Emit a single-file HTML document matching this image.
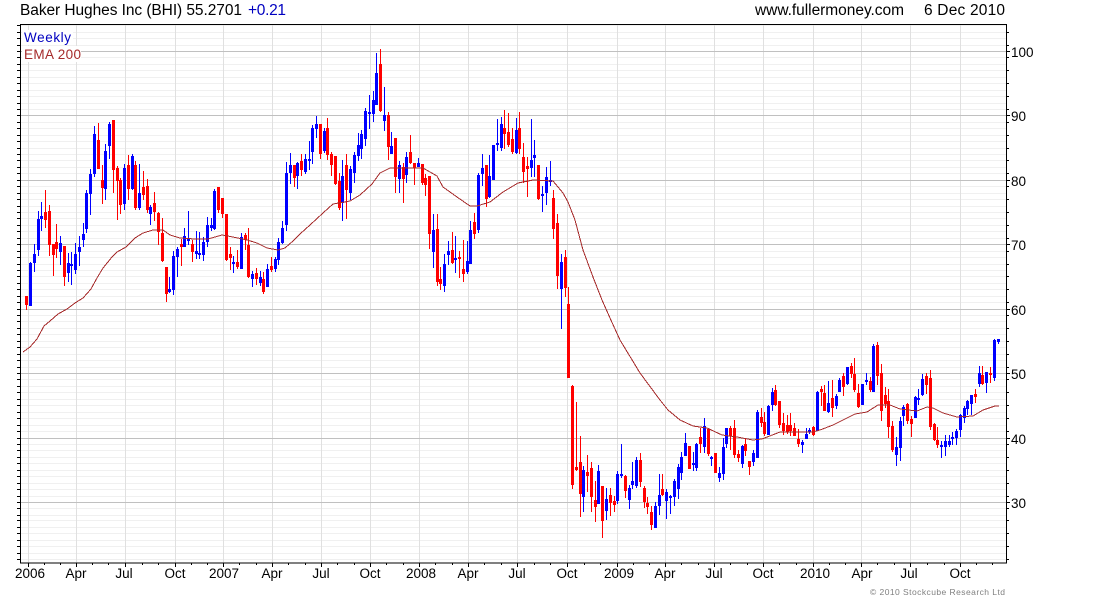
<!DOCTYPE html>
<html><head><meta charset="utf-8"><style>
html,body{margin:0;padding:0;background:#fff;width:1100px;height:600px;overflow:hidden}
svg{display:block}
text{font-family:"Liberation Sans",sans-serif}
</style></head><body>
<svg width="1100" height="600" viewBox="0 0 1100 600" xmlns="http://www.w3.org/2000/svg">
<rect width="1100" height="600" fill="#fff"/>
<g shape-rendering="crispEdges" fill="none">
<path stroke="#f0f0f0" d="M21 25.5H1006M21 32.5H1006M21 38.5H1006M21 45.5H1006M21 57.5H1006M21 64.5H1006M21 70.5H1006M21 77.5H1006M21 83.5H1006M21 90.5H1006M21 96.5H1006M21 103.5H1006M21 109.5H1006M21 122.5H1006M21 128.5H1006M21 135.5H1006M21 141.5H1006M21 148.5H1006M21 154.5H1006M21 160.5H1006M21 167.5H1006M21 173.5H1006M21 186.5H1006M21 193.5H1006M21 199.5H1006M21 206.5H1006M21 212.5H1006M21 218.5H1006M21 225.5H1006M21 231.5H1006M21 238.5H1006M21 251.5H1006M21 257.5H1006M21 264.5H1006M21 270.5H1006M21 276.5H1006M21 283.5H1006M21 289.5H1006M21 296.5H1006M21 302.5H1006M21 315.5H1006M21 321.5H1006M21 328.5H1006M21 334.5H1006M21 341.5H1006M21 347.5H1006M21 354.5H1006M21 360.5H1006M21 367.5H1006M21 379.5H1006M21 386.5H1006M21 392.5H1006M21 399.5H1006M21 405.5H1006M21 412.5H1006M21 418.5H1006M21 425.5H1006M21 431.5H1006M21 444.5H1006M21 450.5H1006M21 457.5H1006M21 463.5H1006M21 470.5H1006M21 476.5H1006M21 483.5H1006M21 489.5H1006M21 496.5H1006M21 508.5H1006M21 515.5H1006M21 520.5H1006M21 527.5H1006M21 533.5H1006M21 540.5H1006M21 546.5H1006M21 553.5H1006M21 559.5H1006"/>
<path stroke="#e0e0e0" d="M28.5 25V563M76.5 25V563M125.5 25V563M175.5 25V563M223.5 25V563M272.5 25V563M321.5 25V563M370.5 25V563M419.5 25V563M468.5 25V563M517.5 25V563M567.5 25V563M617.5 25V563M665.5 25V563M714.5 25V563M763.5 25V563M813.5 25V563M861.5 25V563M910.5 25V563M960.5 25V563"/>
<path stroke="#c0c0c0" d="M21 51.5H1006M21 115.5H1006M21 180.5H1006M21 244.5H1006M21 309.5H1006M21 373.5H1006M21 438.5H1006M21 502.5H1006"/>
<path stroke="#ff0000" d="M26.5 296V310M45.5 190V228M49.5 205V256M53.5 244V276M56.5 224V258M64.5 246V286M98.5 123V169M102.5 165V204M113.5 120V193M117.5 166V220M120.5 178V214M128.5 155V200M135.5 161V210M143.5 171V200M147.5 179V213M154.5 192V221M158.5 212V245M162.5 218V262M166.5 267V302M181.5 239V266M192.5 240V262M218.5 187V213M222.5 198V218M226.5 214V261M230.5 247V270M237.5 250V269M245.5 233V250M248.5 228V278M256.5 268V285M263.5 272V294M271.5 257V272M294.5 165V187M301.5 154V176M320.5 124V159M327.5 118V160M331.5 152V176M335.5 156V185M339.5 173V210M346.5 154V219M380.5 49V112M388.5 112V160M395.5 138V193M403.5 163V203M410.5 135V164M414.5 163V185M422.5 164V185M425.5 174V196M429.5 176V249M437.5 214V286M440.5 267V290M452.5 232V264M459.5 251V278M463.5 240V282M474.5 213V239M486.5 165V207M504.5 110V149M508.5 113V147M512.5 128V154M519.5 112V154M523.5 143V183M527.5 157V197M538.5 165V200M553.5 190V239M557.5 214V289M565.5 250V297M568.5 287V378M572.5 385V489M576.5 402V471M580.5 436V517M587.5 455V492M591.5 462V512M595.5 481V522M602.5 486V538M610.5 488V516M614.5 496V512M625.5 475V498M640.5 453V487M644.5 486V508M647.5 497V514M651.5 506V530M662.5 474V496M689.5 446V469M700.5 428V453M708.5 428V456M715.5 453V473M730.5 426V450M734.5 420V458M738.5 450V462M745.5 438V456M749.5 461V475M761.5 408V427M764.5 412V436M775.5 385V406M779.5 401V428M783.5 413V435M787.5 415V434M790.5 413V436M794.5 423V436M798.5 429V447M813.5 426V436M821.5 386V406M824.5 385V411M832.5 380V417M843.5 373V396M851.5 363V378M854.5 358V392M858.5 384V408M870.5 377V392M877.5 342V385M881.5 364V421M885.5 387V408M888.5 389V438M892.5 421V452M907.5 403V424M911.5 416V437M926.5 373V394M930.5 370V430M934.5 423V441M937.5 427V448M975.5 389V403M982.5 366V385M990.5 367V383"/>
<path stroke="#0000ff" d="M30.5 262V306M34.5 244V272M38.5 211V256M41.5 202V231M60.5 236V265M68.5 253V282M71.5 252V285M75.5 243V274M79.5 236V266M83.5 223V247M86.5 190V233M90.5 169V215M94.5 126V177M105.5 144V200M109.5 122V159M124.5 164V210M132.5 154V190M139.5 164V210M150.5 205V225M169.5 277V293M173.5 251V295M177.5 247V277M184.5 228V247M188.5 211V245M196.5 231V259M199.5 232V259M203.5 237V261M207.5 217V247M211.5 218V231M214.5 189V230M233.5 256V273M241.5 233V269M252.5 271V287M260.5 271V286M267.5 264V287M275.5 257V272M278.5 238V265M282.5 221V244M286.5 162V231M290.5 153V184M297.5 162V189M305.5 154V174M309.5 141V170M312.5 125V164M316.5 116V138M324.5 128V153M342.5 160V221M350.5 166V200M354.5 152V183M358.5 133V161M361.5 130V159M365.5 108V146M369.5 95V129M373.5 91V122M376.5 53V105M384.5 87V131M391.5 132V154M399.5 161V193M406.5 152V183M418.5 158V167M433.5 214V268M444.5 254V292M448.5 241V265M455.5 236V273M467.5 241V274M470.5 221V264M478.5 173V233M482.5 154V186M489.5 155V198M493.5 145V180M497.5 119V151M501.5 117V151M516.5 118V154M531.5 119V177M534.5 140V177M542.5 186V212M546.5 167V205M550.5 161V186M561.5 254V329M583.5 466V512M598.5 465V504M606.5 488V520M617.5 471V504M621.5 444V478M629.5 485V509M632.5 462V489M636.5 457V488M655.5 502V528M659.5 474V515M666.5 489V519M670.5 495V514M674.5 479V506M678.5 464V499M681.5 452V480M685.5 433V456M693.5 452V471M696.5 443V471M704.5 418V453M711.5 456V466M719.5 467V482M723.5 438V480M726.5 428V448M742.5 445V468M753.5 450V466M757.5 410V458M768.5 405V435M772.5 388V411M802.5 440V453M806.5 428V439M809.5 428V434M817.5 391V431M828.5 381V413M836.5 394V409M839.5 378V392M847.5 367V385M862.5 384V405M866.5 373V385M873.5 344V392M896.5 437V466M900.5 417V461M903.5 405V426M915.5 396V418M918.5 389V405M922.5 374V396M941.5 441V458M945.5 435V456M949.5 435V447M952.5 432V445M956.5 429V445M960.5 414V437M964.5 406V423M967.5 400V415M971.5 395V415M979.5 366V387M986.5 372V393M994.5 339V381M998.5 339V344"/>
<path stroke="#ff0000" stroke-width="3" d="M26.5 296V305M45.5 212V220M49.5 211V245M53.5 244V255M56.5 242V249M64.5 246V277M98.5 140V169M102.5 180V188M113.5 120V170M117.5 168V181M120.5 180V205M128.5 165V189M135.5 165V208M143.5 187V195M147.5 186V210M154.5 203V212M158.5 213V232M162.5 233V261M166.5 267V294M181.5 244V247M192.5 244V252M218.5 187V210M222.5 198V214M226.5 214V260M230.5 254V258M237.5 262V267M245.5 235V240M248.5 245V277M256.5 273V279M263.5 279V292M271.5 266V270M294.5 165V178M301.5 161V170M320.5 124V154M327.5 128V155M331.5 154V165M335.5 156V184M339.5 181V208M346.5 165V190M380.5 64V111M388.5 115V147M395.5 138V177M403.5 167V179M410.5 152V163M414.5 163V168M422.5 164V183M425.5 178V185M429.5 176V234M437.5 229V282M440.5 279V284M452.5 250V263M459.5 257V259M463.5 269V274M474.5 222V234M486.5 165V199M504.5 128V134M508.5 132V145M512.5 139V152M519.5 128V149M523.5 157V172M527.5 166V169M538.5 165V199M553.5 198V229M557.5 223V276M565.5 257V288M568.5 304V378M572.5 386V485M576.5 467V470M580.5 462V494M587.5 472V476M591.5 468V497M595.5 500V507M602.5 486V521M610.5 495V503M614.5 501V505M625.5 476V491M640.5 460V482M644.5 488V502M647.5 503V507M651.5 512V525M662.5 489V495M689.5 446V469M700.5 437V444M708.5 429V454M715.5 453V473M730.5 428V436M734.5 428V455M738.5 454V458M745.5 444V451M749.5 461V467M761.5 417V423M764.5 422V434M775.5 390V405M779.5 401V425M783.5 423V431M787.5 425V432M790.5 425V431M794.5 428V436M798.5 439V444M813.5 427V435M821.5 389V392M824.5 393V411M832.5 398V408M843.5 376V387M851.5 366V374M854.5 374V390M858.5 393V407M870.5 381V390M877.5 345V376M881.5 373V411M885.5 395V404M888.5 401V427M892.5 426V450M907.5 404V421M911.5 419V424M926.5 376V385M930.5 378V427M934.5 424V440M937.5 440V445M975.5 394V397M982.5 375V384M990.5 373V375"/>
<path stroke="#0000ff" stroke-width="3" d="M30.5 263V306M34.5 254V263M38.5 219V250M41.5 216V219M60.5 243V252M68.5 263V273M71.5 264V266M75.5 254V270M79.5 247V252M83.5 234V240M86.5 193V229M90.5 174V194M94.5 134V174M105.5 151V189M109.5 124V146M124.5 168V204M132.5 156V189M139.5 193V208M150.5 207V214M169.5 289V292M173.5 256V290M177.5 249V257M184.5 236V247M188.5 238V241M196.5 251V254M199.5 253V255M203.5 242V255M207.5 225V242M211.5 225V228M214.5 191V229M233.5 262V264M241.5 237V269M252.5 274V279M260.5 277V283M267.5 269V287M275.5 259V269M278.5 242V260M282.5 228V243M286.5 173V225M290.5 165V173M297.5 163V176M305.5 159V172M309.5 159V161M312.5 128V152M316.5 124V129M324.5 131V151M342.5 176V203M350.5 169V193M354.5 155V173M358.5 145V156M361.5 134V149M365.5 111V139M369.5 112V114M373.5 100V114M376.5 73V105M384.5 115V121M391.5 146V154M399.5 165V179M406.5 157V175M418.5 163V167M433.5 230V252M444.5 264V286M448.5 251V255M455.5 258V260M467.5 261V272M470.5 230V264M478.5 175V230M482.5 168V174M489.5 176V197M493.5 145V180M497.5 143V145M501.5 124V148M516.5 130V153M531.5 160V168M534.5 155V158M542.5 194V196M546.5 177V193M550.5 180V182M561.5 262V289M583.5 470V497M598.5 471V504M606.5 499V511M617.5 474V501M621.5 474V476M629.5 488V500M632.5 481V485M636.5 460V486M655.5 506V528M659.5 495V506M666.5 492V501M670.5 496V498M674.5 481V497M678.5 467V489M681.5 457V473M685.5 443V456M693.5 463V465M696.5 444V468M704.5 426V447M711.5 457V459M719.5 473V478M723.5 447V474M726.5 428V444M742.5 446V464M753.5 453V462M757.5 412V458M768.5 406V435M772.5 392V405M802.5 442V445M806.5 434V439M809.5 430V432M817.5 392V431M828.5 403V412M836.5 396V406M839.5 380V392M847.5 367V384M862.5 384V405M866.5 380V382M873.5 346V392M896.5 447V455M900.5 421V448M903.5 407V416M915.5 397V418M918.5 398V400M922.5 379V395M941.5 445V447M945.5 441V447M949.5 441V445M952.5 437V439M956.5 431V438M960.5 415V430M964.5 408V418M967.5 401V409M971.5 395V404M979.5 373V384M986.5 372V383M994.5 340V378M998.5 339V342"/>
<polyline stroke="#a52a2a" stroke-width="1" points="23,352 30,347 37,339 44,326 50,321 58,314 67,309 75,303 83,298 91,289 97,278 103,268 112,257 117,252 126,247 135,238 143,233 153,230 163,230 170,235 180,238 195,239 208,239 222,235 233,237 247,240 257,243 267,248 278,250 285,248 293,241 300,234 310,225 323,213 333,204 350,201 360,195 372,184 380,173 390,168 407,168 423,168 437,176 443,187 457,197 470,206 477,206 490,202 503,192 518,183 533,180 553,181 563,193 568,202 575,220 583,250 593,277 602,300 610,318 620,340 640,373 660,400 668,410 680,420 693,426 707,428 722,435 737,437 753,440 762,439 780,432 800,432 813,432 820,430 833,425 843,420 855,414 867,412 878,405 890,405 900,409 917,411 927,407 933,408 943,413 957,417 973,416 983,410 995,406 999,406"/>
<rect x="20.5" y="24.5" width="986" height="538.5" stroke="#000" stroke-width="1"/>
<path stroke="#000" d="M17 25.5H20M17 32.5H20M17 38.5H20M17 45.5H20M17 51.5H20M17 57.5H20M17 64.5H20M17 70.5H20M17 77.5H20M17 83.5H20M17 90.5H20M17 96.5H20M17 103.5H20M17 109.5H20M17 115.5H20M17 122.5H20M17 128.5H20M17 135.5H20M17 141.5H20M17 148.5H20M17 154.5H20M17 160.5H20M17 167.5H20M17 173.5H20M17 180.5H20M17 186.5H20M17 193.5H20M17 199.5H20M17 206.5H20M17 212.5H20M17 218.5H20M17 225.5H20M17 231.5H20M17 238.5H20M17 244.5H20M17 251.5H20M17 257.5H20M17 264.5H20M17 270.5H20M17 276.5H20M17 283.5H20M17 289.5H20M17 296.5H20M17 302.5H20M17 309.5H20M17 315.5H20M17 321.5H20M17 328.5H20M17 334.5H20M17 341.5H20M17 347.5H20M17 354.5H20M17 360.5H20M17 367.5H20M17 373.5H20M17 379.5H20M17 386.5H20M17 392.5H20M17 399.5H20M17 405.5H20M17 412.5H20M17 418.5H20M17 425.5H20M17 431.5H20M17 438.5H20M17 444.5H20M17 450.5H20M17 457.5H20M17 463.5H20M17 470.5H20M17 476.5H20M17 483.5H20M17 489.5H20M17 496.5H20M17 502.5H20M17 508.5H20M17 515.5H20M17 520.5H20M17 527.5H20M17 533.5H20M17 540.5H20M17 546.5H20M17 553.5H20M17 559.5H20"/>
<path stroke="#000" d="M1007 32.5H1009M1007 45.5H1009M1007 51.5H1010M1007 57.5H1009M1007 70.5H1009M1007 83.5H1009M1007 96.5H1009M1007 109.5H1009M1007 115.5H1010M1007 122.5H1009M1007 135.5H1009M1007 148.5H1009M1007 160.5H1009M1007 173.5H1009M1007 180.5H1010M1007 186.5H1009M1007 199.5H1009M1007 212.5H1009M1007 225.5H1009M1007 238.5H1009M1007 244.5H1010M1007 251.5H1009M1007 264.5H1009M1007 276.5H1009M1007 289.5H1009M1007 302.5H1009M1007 309.5H1010M1007 315.5H1009M1007 328.5H1009M1007 341.5H1009M1007 354.5H1009M1007 367.5H1009M1007 373.5H1010M1007 379.5H1009M1007 392.5H1009M1007 405.5H1009M1007 418.5H1009M1007 431.5H1009M1007 438.5H1010M1007 444.5H1009M1007 457.5H1009M1007 470.5H1009M1007 483.5H1009M1007 496.5H1009M1007 502.5H1010M1007 508.5H1009M1007 520.5H1009M1007 533.5H1009M1007 546.5H1009M1007 559.5H1009"/>
<path stroke="#000" d="M28.5 563V567M76.5 563V567M125.5 563V567M175.5 563V567M223.5 563V567M272.5 563V567M321.5 563V567M370.5 563V567M419.5 563V567M468.5 563V567M517.5 563V567M567.5 563V567M617.5 563V567M665.5 563V567M714.5 563V567M763.5 563V567M813.5 563V567M861.5 563V567M910.5 563V567M960.5 563V567M44.5 563V565M60.5 563V565M92.5 563V565M108.5 563V565M142.5 563V565M158.5 563V565M191.5 563V565M207.5 563V565M239.5 563V565M256.5 563V565M288.5 563V565M305.5 563V565M337.5 563V565M354.5 563V565M386.5 563V565M403.5 563V565M435.5 563V565M452.5 563V565M484.5 563V565M501.5 563V565M534.5 563V565M550.5 563V565M584.5 563V565M600.5 563V565M633.5 563V565M649.5 563V565M681.5 563V565M698.5 563V565M730.5 563V565M747.5 563V565M779.5 563V565M796.5 563V565M829.5 563V565M845.5 563V565M877.5 563V565M894.5 563V565M927.5 563V565M944.5 563V565M976.5 563V565M992.5 563V565"/>
<rect x="22" y="30" width="51" height="15" fill="#fff"/>
<rect x="22" y="46" width="59" height="16" fill="#fff"/>
</g>
<text x="20" y="15" font-size="15.5" textLength="222" lengthAdjust="spacing" fill="#000">Baker Hughes Inc (BHI) 55.2701</text>
<text x="248" y="15" font-size="15.5" textLength="38" lengthAdjust="spacing" fill="#0000c0">+0.21</text>
<text x="755" y="15" font-size="15.5" textLength="149" lengthAdjust="spacing" fill="#000">www.fullermoney.com</text>
<text x="924" y="15" font-size="15.5" textLength="81" lengthAdjust="spacing" fill="#000">6 Dec 2010</text>
<text x="24" y="42" font-size="13.5" textLength="47" lengthAdjust="spacing" fill="#0000c0">Weekly</text>
<text x="24" y="59" font-size="13.5" textLength="57" lengthAdjust="spacing" fill="#a52a2a">EMA 200</text>
<g font-size="13.5" fill="#000">
<text x="1011" y="57">100</text><text x="1011" y="121">90</text><text x="1011" y="186">80</text><text x="1011" y="250">70</text><text x="1011" y="315">60</text><text x="1011" y="379">50</text><text x="1011" y="444">40</text><text x="1011" y="508">30</text>
</g>
<g font-size="13.5" fill="#000" text-anchor="middle">
<text x="30" y="578">2006</text><text x="76" y="578">Apr</text><text x="124" y="578">Jul</text><text x="175" y="578">Oct</text><text x="224" y="578">2007</text><text x="272" y="578">Apr</text><text x="321" y="578">Jul</text><text x="370" y="578">Oct</text><text x="421" y="578">2008</text><text x="468" y="578">Apr</text><text x="517" y="578">Jul</text><text x="567" y="578">Oct</text><text x="619" y="578">2009</text><text x="665" y="578">Apr</text><text x="714" y="578">Jul</text><text x="763" y="578">Oct</text><text x="815" y="578">2010</text><text x="862" y="578">Apr</text><text x="909" y="578">Jul</text><text x="960" y="578">Oct</text>
</g>
<text x="870" y="595" font-size="8.5" textLength="135" lengthAdjust="spacing" fill="#808080">© 2010 Stockcube Research Ltd</text>
</svg>
</body></html>
